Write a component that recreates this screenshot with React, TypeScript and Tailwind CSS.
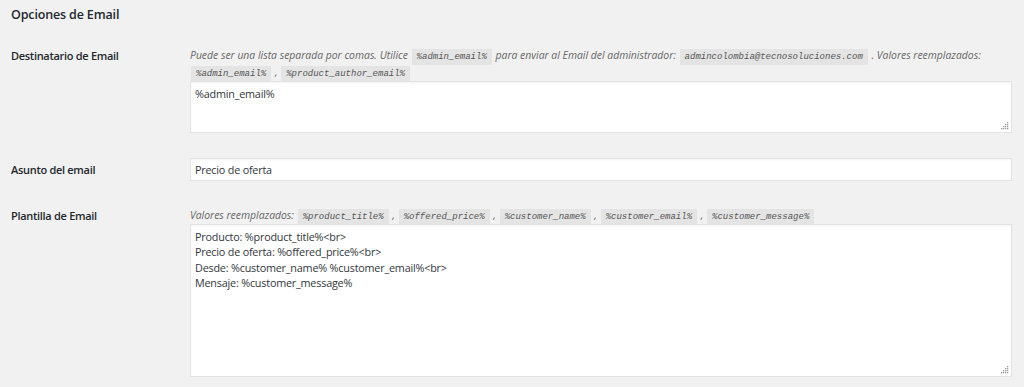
import React from "react";

const sans = "font-['Open_Sans','Noto_Sans',sans-serif]";

function Code({ children }: { children: React.ReactNode }) {
  return (
    <code className="bg-[#e4e4e4] px-[5px] py-[3px] mx-[1px] font-['Liberation_Mono','DejaVu_Sans_Mono',monospace] text-[9px] leading-[10px] italic tracking-normal text-[#555]">
      {children}
    </code>
  );
}

function Handle() {
  return (
    <svg
      className="absolute right-[3px] bottom-[3px] pointer-events-none"
      width="8"
      height="8"
      viewBox="0 0 8 8"
    >
      {[
        [6, 0],
        [4, 2],
        [6, 2],
        [2, 4],
        [4, 4],
        [6, 4],
        [0, 6],
        [2, 6],
        [4, 6],
        [6, 6],
      ].map(([x, y], i) => (
        <rect key={i} x={x} y={y} width="1.3" height="1.3" fill="#9a9a9a" />
      ))}
    </svg>
  );
}

function Area({ value, h }: { value: string; h: string }) {
  return (
    <div className={`relative ${h}`}>
      <textarea
        readOnly
        defaultValue={value}
        className={`block w-full h-full resize-none bg-white border border-[#e2e2e2] shadow-[inset_0_1px_2px_rgba(0,0,0,0.05)] px-[4px] pt-[4px] text-[10.8px] leading-[15.4px] tracking-[-0.2px] text-[#32373c] outline-none ${sans}`}
      />
      <Handle />
    </div>
  );
}

const label = "w-[179px] shrink-0 text-[11px] leading-[17px] font-semibold tracking-[-0.3px]";
const desc = "text-[10.4px] leading-[17px] italic text-[#666]";

export default function App() {
  return (
    <div className={`min-h-[387px] bg-[#f1f1f1] text-[#23282d] ${sans}`}>
      <div className="pl-[11px] pr-[12px]">
        <h2 className="pt-[6px] text-[12.5px] leading-[18px] font-semibold tracking-[-0.15px] text-[#23282d]">
          Opciones de Email
        </h2>

        {/* Row 1 */}
        <div className="flex mt-[23px]">
          <div className={label}>Destinatario de Email</div>
          <div className="flex-1 min-w-0">
            <p className={desc}>
              Puede ser una lista separada por comas. Utilice <Code>%admin_email%</Code> para enviar al Email del administrador:{" "}
              <Code>admincolombia@tecnosoluciones.com</Code> . Valores reemplazados:{" "}
              <Code>%admin_email%</Code> , <Code>%product_author_email%</Code>
            </p>
            <Area value="%admin_email%" h="h-[52px]" />
          </div>
        </div>

        {/* Row 2 */}
        <div className="flex mt-[25px] items-center">
          <div className={label}>Asunto del email</div>
          <div className="flex-1 min-w-0">
            <input
              readOnly
              defaultValue="Precio de oferta"
              className={`block w-full h-[23px] bg-white border border-[#e2e2e2] shadow-[inset_0_1px_2px_rgba(0,0,0,0.05)] px-[4px] text-[10.8px] tracking-[-0.2px] text-[#32373c] outline-none ${sans}`}
            />
          </div>
        </div>

        {/* Row 3 */}
        <div className="flex mt-[26px]">
          <div className={label}>Plantilla de Email</div>
          <div className="flex-1 min-w-0">
            <p className={desc}>
              Valores reemplazados: <Code>%product_title%</Code> , <Code>%offered_price%</Code> ,{" "}
              <Code>%customer_name%</Code> , <Code>%customer_email%</Code> , <Code>%customer_message%</Code>
            </p>
            <Area
              value={
                "Producto: %product_title%<br>\nPrecio de oferta: %offered_price%<br>\nDesde: %customer_name% %customer_email%<br>\nMensaje: %customer_message%"
              }
              h="h-[153px]"
            />
          </div>
        </div>
      </div>
    </div>
  );
}
